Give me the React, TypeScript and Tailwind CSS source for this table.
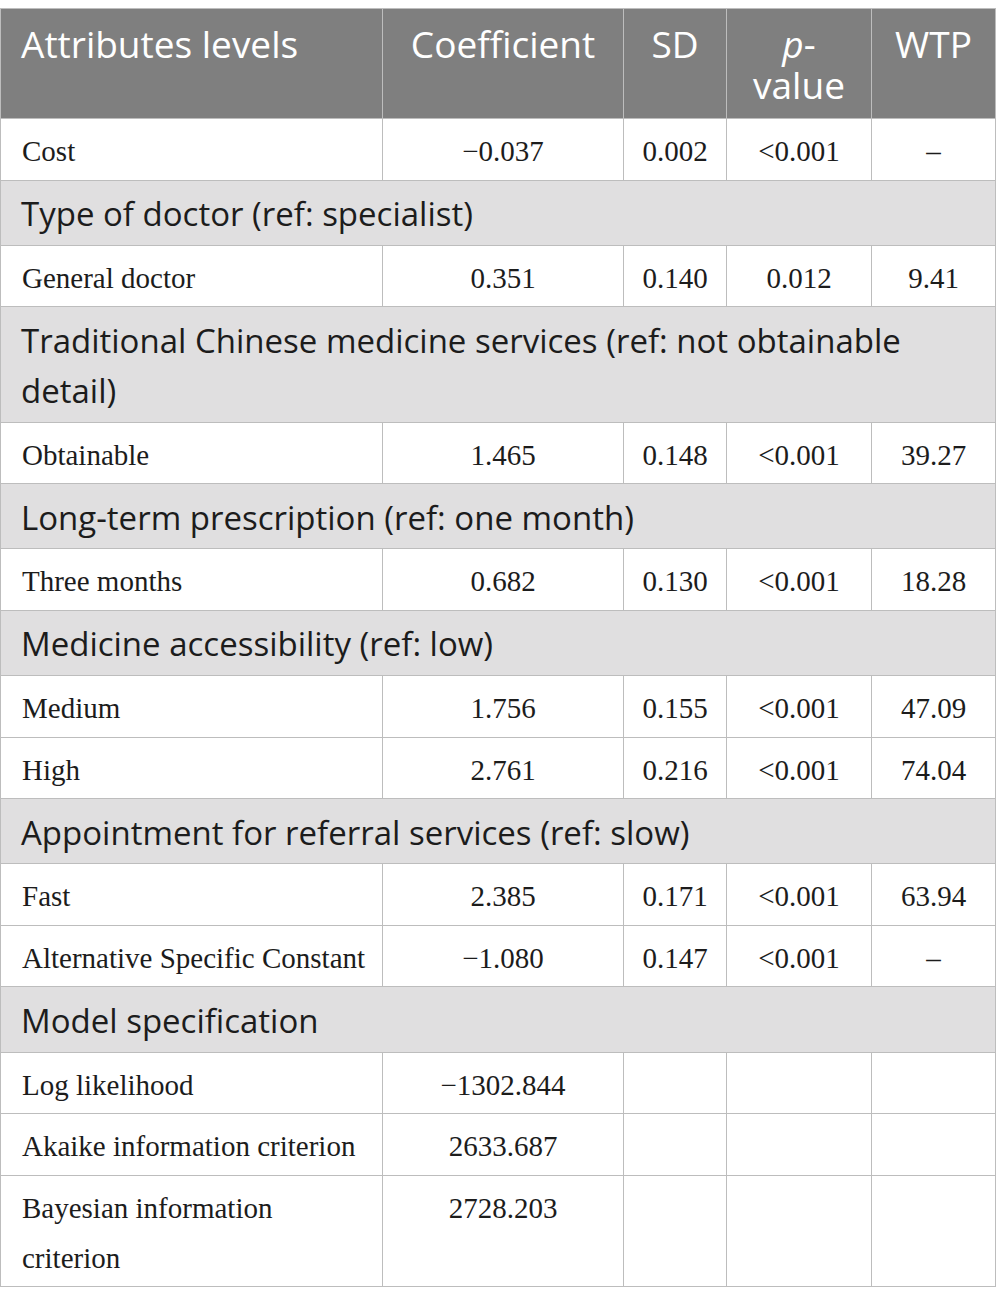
import React from "react";

const sans = "font-['Open_Sans',sans-serif]";
const serif = "font-['Liberation_Serif',serif]";

type Row =
  | { kind: "section"; label: React.ReactNode }
  | { kind: "data"; cells: [React.ReactNode, string, string, string, string] };

const rows: Row[] = [
  { kind: "data", cells: ["Cost", "\u22120.037", "0.002", "<0.001", "\u2013"] },
  { kind: "section", label: "Type of doctor (ref: specialist)" },
  { kind: "data", cells: ["General doctor", "0.351", "0.140", "0.012", "9.41"] },
  {
    kind: "section",
    label: (
      <>
        Traditional Chinese medicine services (ref: not obtainable
        <br />
        detail)
      </>
    ),
  },
  { kind: "data", cells: ["Obtainable", "1.465", "0.148", "<0.001", "39.27"] },
  { kind: "section", label: "Long-term prescription (ref: one month)" },
  { kind: "data", cells: ["Three months", "0.682", "0.130", "<0.001", "18.28"] },
  { kind: "section", label: "Medicine accessibility (ref: low)" },
  { kind: "data", cells: ["Medium", "1.756", "0.155", "<0.001", "47.09"] },
  { kind: "data", cells: ["High", "2.761", "0.216", "<0.001", "74.04"] },
  { kind: "section", label: "Appointment for referral services (ref: slow)" },
  { kind: "data", cells: ["Fast", "2.385", "0.171", "<0.001", "63.94"] },
  { kind: "data", cells: ["Alternative Specific Constant", "\u22121.080", "0.147", "<0.001", "\u2013"] },
  { kind: "section", label: "Model specification" },
  { kind: "data", cells: ["Log likelihood", "\u22121302.844", "", "", ""] },
  { kind: "data", cells: ["Akaike information criterion", "2633.687", "", "", ""] },
  {
    kind: "data",
    cells: [
      <>
        Bayesian information
        <br />
        criterion
      </>,
      "2728.203",
      "",
      "",
      "",
    ],
  },
];

const bd = "border-[1.5px] border-[#bdbdbd]";
const th = `${bd} align-top text-center font-normal pt-[14px] pb-[13px] whitespace-nowrap`;

export default function App() {
  return (
    <div className="w-[996px] min-h-[1305px] bg-white pt-[8px]">
      <table className="w-[995px] table-fixed border-collapse">
        <colgroup>
          <col className="w-[382px]" />
          <col className="w-[241px]" />
          <col className="w-[103px]" />
          <col className="w-[145px]" />
          <col className="w-[124px]" />
        </colgroup>
        <thead>
          <tr className={`bg-[#7f7f7f] text-white ${sans} text-[37px] leading-[41px]`}>
            <th className={`${bd} align-top text-left font-normal pl-[20px] pr-2 pt-[14px] pb-[13px] whitespace-nowrap`}>
              Attributes levels
            </th>
            <th className={th}>Coefficient</th>
            <th className={th}>SD</th>
            <th className={th}>
              <span className="block">
                <i>p</i>-
              </span>
              <span className="block">value</span>
            </th>
            <th className={th}>WTP</th>
          </tr>
        </thead>
        <tbody>
          {rows.map((r, i) =>
            r.kind === "section" ? (
              <tr key={i} className="bg-[#e0dfe0]">
                <td
                  colSpan={5}
                  className={`${bd} ${sans} text-[33px] leading-[50px] text-[#1c1c1c] pl-[20px] pr-2 pt-[8.5px] pb-[5.75px] align-top whitespace-nowrap`}
                >
                  {r.label}
                </td>
              </tr>
            ) : (
              <tr key={i} className={`${serif} text-[29px] leading-[50px] text-[#1c1c1c]`}>
                {r.cells.map((c, j) => (
                  <td
                    key={j}
                    className={`${bd} align-top pt-[7px] pb-[3.5px] whitespace-nowrap ${
                      j === 0 ? "text-left pl-[21px] pr-2" : "text-center"
                    }`}
                  >
                    {c}
                  </td>
                ))}
              </tr>
            )
          )}
        </tbody>
      </table>
    </div>
  );
}
